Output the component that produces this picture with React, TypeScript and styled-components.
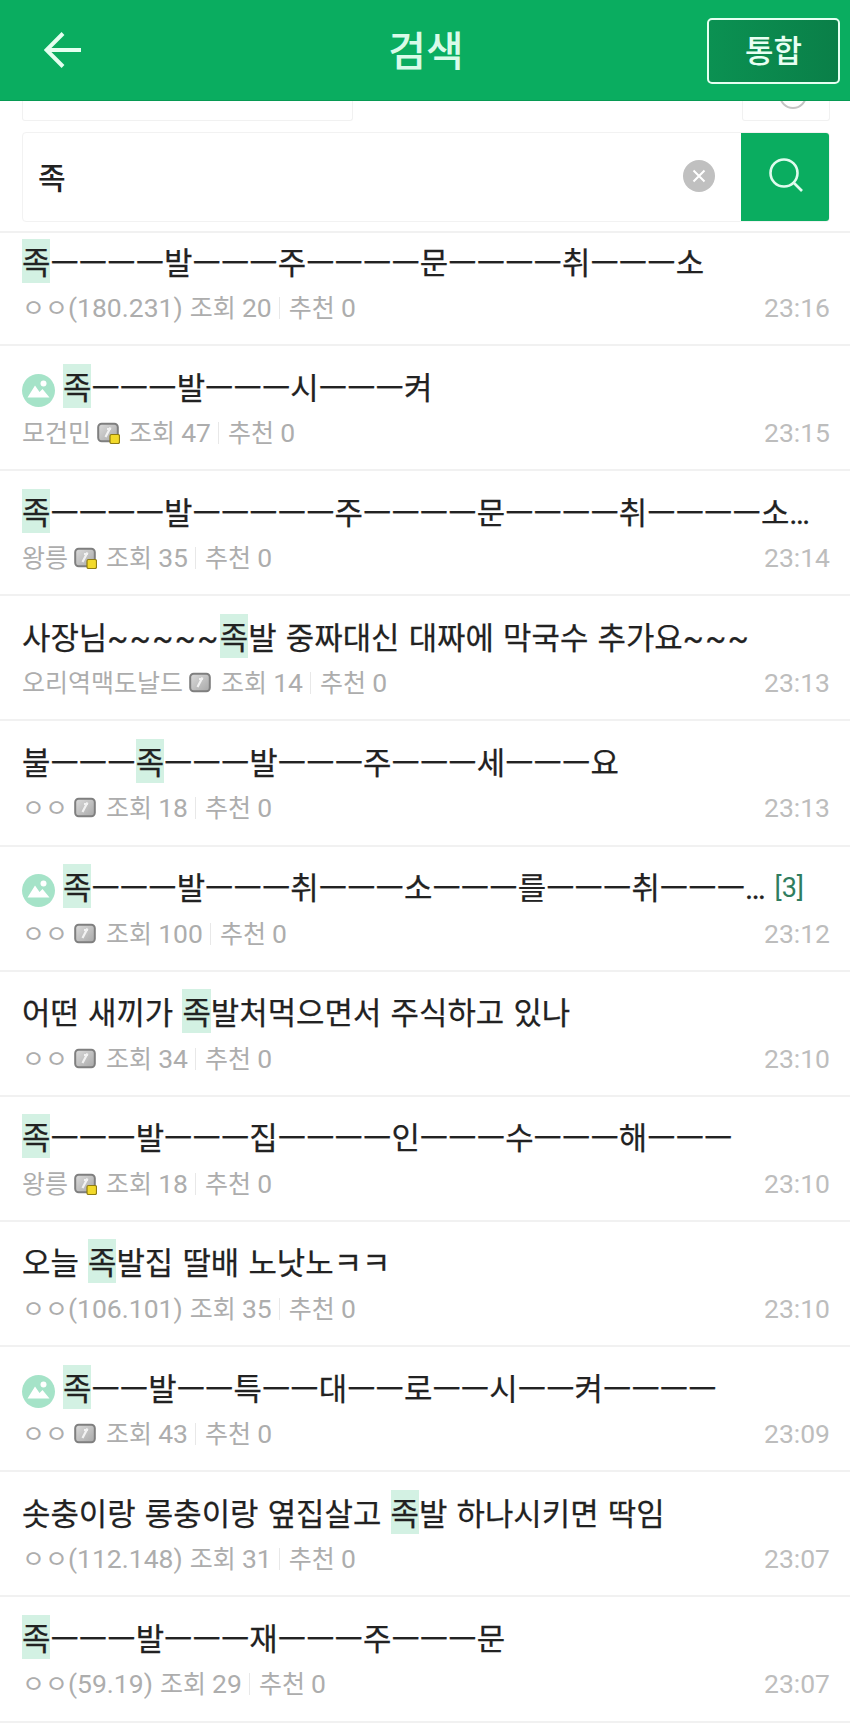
import React from "react";
import styled, { createGlobalStyle } from "styled-components";

const Global = createGlobalStyle`
  html, body { margin: 0; padding: 0; background: #fff; }
  body { font-family: "Noto Sans CJK KR", sans-serif; overflow: hidden; }
  * { box-sizing: border-box; }
`;

const Page = styled.div`
  width: 850px;
  height: 1734px;
  overflow: hidden;
  background: #fff;
`;

const Header = styled.header`
  height: 101px;
  background: #0aad60;
  border-bottom: 1px solid #079a53;
  display: grid;
  grid-template-columns: 1fr auto 1fr;
  align-items: center;
  padding: 0 10px;
`;

const BackButton = styled.div`
  display: flex;
  align-items: center;
  margin-left: 34px;
  color: #e4fff0;
`;

const HeaderTitle = styled.h1`
  margin: 0 0 4px 2px;
  font-size: 41px;
  font-weight: 500;
  line-height: 1;
  color: #d9fbe9;
`;

const ModeButton = styled.div`
  justify-self: end;
  width: 133px;
  height: 66px;
  margin-top: 1px;
  padding-bottom: 4px;
  border: 2px solid #e6fff1;
  border-radius: 5px;
  background: linear-gradient(90deg, #0b9152, #0a7f48);
  color: #e8fff3;
  font-size: 31px;
  font-weight: 500;
  display: flex;
  align-items: center;
  justify-content: center;
`;

const SearchArea = styled.section`
  padding: 0 20px 0 22px;
  height: 132px;
  border-bottom: 2px solid #f1f1f1;
`;

const TopRow = styled.div`
  height: 20px;
  display: flex;
  justify-content: space-between;
`;

const ClippedBox = styled.div<{ $w: number }>`
  width: ${(p) => p.$w}px;
  height: 20px;
  border: 1px solid #f1f1f1;
  border-top: none;
  border-radius: 0 0 3px 3px;
  position: relative;
  overflow: hidden;
`;

const ClippedCircle = styled.div`
  position: absolute;
  left: 36px;
  top: -20px;
  width: 28px;
  height: 28px;
  border-radius: 50%;
  border: 2px solid #c4c4c4;
`;

const SearchBox = styled.div`
  margin-top: 11px;
  height: 90px;
  display: flex;
  border: 1px solid #f2f2f2;
  border-radius: 4px;
  overflow: hidden;
`;

const SearchText = styled.div`
  flex: 1;
  padding: 0 0 2px 15px;
  font-size: 30px;
  font-weight: 500;
  color: #222;
  display: flex;
  align-items: center;
`;

const ClearIcon = styled.div`
  align-self: center;
  width: 32px;
  height: 32px;
  margin: 0 26px 3px 0;
  border-radius: 50%;
  background: #c0c0c0;
  display: flex;
  align-items: center;
  justify-content: center;
`;

const SearchButton = styled.div`
  width: 89px;
  margin: -1px -1px -1px 0;
  padding-bottom: 4px;
  background: #0aad60;
  display: flex;
  align-items: center;
  justify-content: center;
`;

const Row = styled.article`
  height: 125.15px;
  padding: 19px 20px 0 22px;
  border-bottom: 2px solid #f1f1f1;
  &:first-child {
    height: 113px;
    padding-top: 7px;
  }
`;

const TitleLine = styled.div`
  height: 44px;
  display: flex;
  align-items: center;
`;

const PhotoBadge = styled.svg`
  flex: none;
  width: 33px;
  height: 33px;
  margin-right: 8px;
  margin-top: 6px;
`;

const Title = styled.div`
  min-width: 0;
  white-space: nowrap;
  overflow: hidden;
  text-overflow: ellipsis;
  font-family: Roboto, "Noto Sans CJK KR", sans-serif;
  font-size: 30.9px;
  word-spacing: 1.5px;
  line-height: 44px;
  color: #222;
  -webkit-text-stroke: 0.25px #222;
`;

const Wave = styled.span`
  letter-spacing: 1.5px;
`;

const Mark = styled.mark`
  display: inline-block;
  background: #d3f1e3;
  color: inherit;
  line-height: 39px;
  padding-top: 5px;
  height: 44px;
`;

const Count = styled.span`
  flex: none;
  margin: 0 26px 0 8px;
  font-family: Roboto, sans-serif;
  font-size: 27px;
  color: #2f7d5f;
`;

const MetaLine = styled.div`
  height: 44px;
  margin-top: 2px;
  display: flex;
  align-items: baseline;
  font-family: Roboto, "Noto Sans CJK KR", sans-serif;
  font-size: 25px;
  line-height: 44px;
  color: #adadad;
  white-space: nowrap;
`;

const Latin = styled.span`
  font-size: 26.5px;
`;

const LevelGlyph = styled.svg`
  flex: none;
  align-self: center;
  width: 23px;
  height: 22px;
  margin-left: 6px;
`;

const Views = styled.span<{ $afterIcon: boolean }>`
  margin-left: ${(p) => (p.$afterIcon ? 9 : 7)}px;
`;

const Pipe = styled.span`
  align-self: center;
  width: 1px;
  height: 22px;
  margin: 0 9px 0 7px;
  background: #e8e8e8;
`;

const Time = styled.span`
  margin-left: auto;
  font-size: 26.5px;
  color: #bdbdbd;
`;

type LevelKind = "none" | "gray" | "yellow";
type Item = {
  pre?: string;
  post: string;
  photo?: boolean;
  author: string;
  level: LevelKind;
  views: number;
  time: string;
  count?: number;
};

const items: Item[] = [
  { post: "ㅡㅡㅡㅡ발ㅡㅡㅡ주ㅡㅡㅡㅡ문ㅡㅡㅡㅡ취ㅡㅡㅡ소", author: "ㅇㅇ(180.231)", level: "none", views: 20, time: "23:16" },
  { post: "ㅡㅡㅡ발ㅡㅡㅡ시ㅡㅡㅡ켜", photo: true, author: "모건민", level: "yellow", views: 47, time: "23:15" },
  { post: "ㅡㅡㅡㅡ발ㅡㅡㅡㅡㅡ주ㅡㅡㅡㅡ문ㅡㅡㅡㅡ취ㅡㅡㅡㅡ소ㅡㅡㅡㅡㅡ", author: "왕릉", level: "yellow", views: 35, time: "23:14" },
  { pre: "사장님~~~~~", post: "발 중짜대신 대짜에 막국수 추가요~~~", author: "오리역맥도날드", level: "gray", views: 14, time: "23:13" },
  { pre: "불ㅡㅡㅡ", post: "ㅡㅡㅡ발ㅡㅡㅡ주ㅡㅡㅡ세ㅡㅡㅡ요", author: "ㅇㅇ", level: "gray", views: 18, time: "23:13" },
  { post: "ㅡㅡㅡ발ㅡㅡㅡ취ㅡㅡㅡ소ㅡㅡㅡ를ㅡㅡㅡ취ㅡㅡㅡㅡㅡㅡㅡㅡㅡ", photo: true, count: 3, author: "ㅇㅇ", level: "gray", views: 100, time: "23:12" },
  { pre: "어떤 새끼가 ", post: "발처먹으면서 주식하고 있나", author: "ㅇㅇ", level: "gray", views: 34, time: "23:10" },
  { post: "ㅡㅡㅡ발ㅡㅡㅡ집ㅡㅡㅡㅡ인ㅡㅡㅡ수ㅡㅡㅡ해ㅡㅡㅡ", author: "왕릉", level: "yellow", views: 18, time: "23:10" },
  { pre: "오늘 ", post: "발집 딸배 노낫노ㅋㅋ", author: "ㅇㅇ(106.101)", level: "none", views: 35, time: "23:10" },
  { post: "ㅡㅡ발ㅡㅡ특ㅡㅡ대ㅡㅡ로ㅡㅡ시ㅡㅡ켜ㅡㅡㅡㅡ", photo: true, author: "ㅇㅇ", level: "gray", views: 43, time: "23:09" },
  { pre: "솟충이랑 롱충이랑 옆집살고 ", post: "발 하나시키면 딱임", author: "ㅇㅇ(112.148)", level: "none", views: 31, time: "23:07" },
  { post: "ㅡㅡㅡ발ㅡㅡㅡ재ㅡㅡㅡ주ㅡㅡㅡ문", author: "ㅇㅇ(59.19)", level: "none", views: 29, time: "23:07" },
];

const withWaves = (text?: string) =>
  (text ?? "").split(/(~+)/).map((part, i) => (part.startsWith("~") ? <Wave key={i}>{part}</Wave> : part));

const withLatin = (text: string) =>
  text.split(/([0-9().]+)/).map((part, i) => (i % 2 ? <Latin key={i}>{part}</Latin> : part));

const LevelIcon = ({ yellow, id }: { yellow: boolean; id: string }) => (
  <LevelGlyph viewBox="0 0 23 22">
    <defs>
      <linearGradient id={id} x1="0" y1="0" x2="1" y2="1">
        <stop offset="0" stopColor="#dcdcdc" />
        <stop offset="1" stopColor="#a8a8a8" />
      </linearGradient>
    </defs>
    <rect x="1.2" y="1.7" width="19.6" height="17.6" rx="3.5" fill={`url(#${id})`} stroke="#7f7f7f" strokeWidth="2" />
    <path d="M13.5 5.5 L8.5 15 M10 7 H14" stroke="#f2f2f2" strokeWidth="2.2" fill="none" />
    {yellow && <rect x="13" y="12.5" width="9.5" height="9" rx="1.5" fill="#f2d92a" stroke="#8f7c12" strokeWidth="1.2" />}
  </LevelGlyph>
);

const PhotoIcon = () => (
  <PhotoBadge viewBox="0 0 33 33">
    <circle cx="16.5" cy="16.5" r="16.5" fill="#a5e3c8" />
    <circle cx="21.5" cy="9.5" r="3" fill="#fff" />
    <path d="M5.5 23.5 L13 11.5 L17.5 18 L20.5 15 L27.5 23.5 Z" fill="#fff" />
  </PhotoBadge>
);

export default function App() {
  return (
    <Page>
      <Global />
      <Header>
        <BackButton>
          <svg width="38" height="36" viewBox="0 0 38 36" fill="none" stroke="currentColor" strokeWidth="4">
            <path d="M37 18 H3 M19 1.5 L2.5 18 L19 34.5" />
          </svg>
        </BackButton>
        <HeaderTitle>검색</HeaderTitle>
        <ModeButton>통합</ModeButton>
      </Header>
      <SearchArea>
        <TopRow>
          <ClippedBox $w={331} />
          <ClippedBox $w={88}>
            <ClippedCircle />
          </ClippedBox>
        </TopRow>
        <SearchBox>
          <SearchText>족</SearchText>
          <ClearIcon>
            <svg width="16" height="16" viewBox="0 0 16 16" stroke="#fff" strokeWidth="2">
              <path d="M2.5 2.5 L13.5 13.5 M13.5 2.5 L2.5 13.5" />
            </svg>
          </ClearIcon>
          <SearchButton>
            <svg width="36" height="36" viewBox="0 0 36 36" fill="none" stroke="#dffbed" strokeWidth="2.6">
              <circle cx="16" cy="16" r="13.5" />
              <path d="M26 26 L34 34" />
            </svg>
          </SearchButton>
        </SearchBox>
      </SearchArea>
      <div>
        {items.map((it, i) => (
          <Row key={i}>
            <TitleLine>
              {it.photo && <PhotoIcon />}
              <Title>
                {withWaves(it.pre)}
                <Mark>족</Mark>
                {withWaves(it.post)}
              </Title>
              {it.count !== undefined && <Count>[{it.count}]</Count>}
            </TitleLine>
            <MetaLine>
              <span>{withLatin(it.author)}</span>
              {it.level !== "none" && <LevelIcon id={`lv${i}`} yellow={it.level === "yellow"} />}
              <Views $afterIcon={it.level !== "none"}>{withLatin(`조회 ${it.views}`)}</Views>
              <Pipe />
              <span>{withLatin("추천 0")}</span>
              <Time>{it.time}</Time>
            </MetaLine>
          </Row>
        ))}
      </div>
    </Page>
  );
}
